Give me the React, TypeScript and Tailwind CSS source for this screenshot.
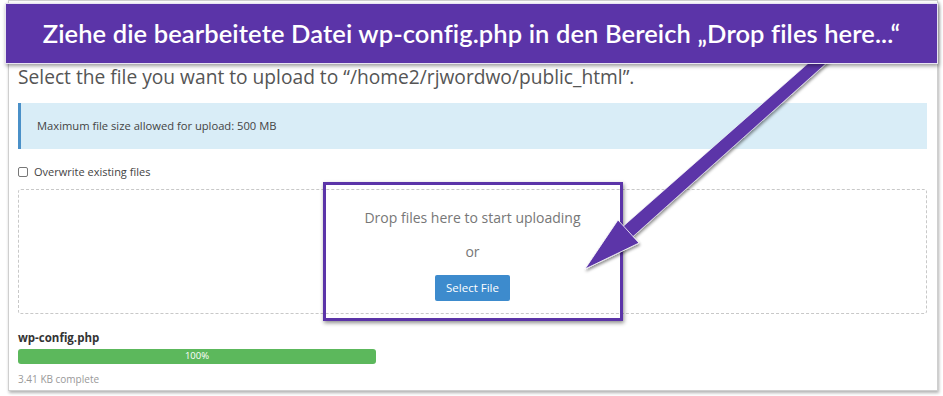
export default function App() {
  return (
    <div className="relative h-[396px] w-[943px] overflow-hidden bg-white font-['Open_Sans',sans-serif]">
      {/* the cPanel upload card */}
      <div className="ml-[8px] h-[391px] w-[930px] border border-[#cfcfcf] bg-white pl-[9px] pr-[10px] pt-[63px] shadow-[1px_2px_3px_rgba(0,0,0,0.3)]">
        <h2 className="text-[19.2px] leading-[26px] text-[#555]">
          Select the file you want to upload to “/home2/rjwordwo/public_html”.
        </h2>

        <div className="mt-[13px] flex h-[46px] items-center border-l-[3px] border-[#4a90c8] bg-[#d9edf7] pl-[16px] text-[11.2px] text-[#444]">
          Maximum file size allowed for upload: 500 MB
        </div>

        <label className="mt-[16px] flex items-center gap-[6px] text-[11px] leading-[14px] text-[#444]">
          <span className="h-[10px] w-[10px] rounded-[2px] border border-[#777] bg-white" />
          Overwrite existing files
        </label>

        <div className="mt-[10px] flex h-[125px] flex-col items-center rounded-[3px] border border-dashed border-[#c8c8c8] pt-[18px]">
          <p className="text-[14px] leading-[20px] text-[#777]">Drop files here to start uploading</p>
          <p className="mt-[14px] text-[14px] leading-[20px] text-[#777]">or</p>
          <button className="mt-[13px] h-[26px] rounded-[2px] bg-[#3d8bcd] px-[11px] text-[11.5px] text-white">
            Select File
          </button>
        </div>

        <p className="mt-[17px] text-[11.5px] font-bold leading-[14px] text-[#333]">wp-config.php</p>
        <div className="mt-[4px] flex h-[15px] w-[358px] items-center justify-center rounded-[3px] bg-[#5cb85c] text-[9.5px] text-white">
          100%
        </div>
        <p className="mt-[8px] text-[10px] leading-[14px] text-[#999]">3.41 KB complete</p>
      </div>

      {/* annotation: highlight around the drop area */}
      <div className="absolute left-[323px] top-[182px] h-[139px] w-[300px] border-[3px] border-[#5b34a8] shadow-[1px_2px_4px_rgba(0,0,0,0.45)]" />

      {/* annotation: arrow */}
      <svg className="absolute left-0 top-0" width="943" height="396" viewBox="0 0 943 396">
        <defs>
          <filter id="sh" x="-20%" y="-20%" width="140%" height="140%">
            <feDropShadow dx="1" dy="2" stdDeviation="1.5" floodColor="#000" floodOpacity="0.45" />
          </filter>
        </defs>
        <g filter="url(#sh)">
          <polygon points="812,60 830,60 628,241 619,230" fill="#5b34a8" stroke="#fff" strokeWidth="0.6" />
          <polygon points="585,269 618,220 639,243" fill="#5b34a8" stroke="#fff" strokeWidth="0.8" strokeLinejoin="round" />
        </g>
      </svg>

      {/* annotation: banner */}
      <div className="absolute left-[5px] top-[3px] flex h-[61px] w-[933px] items-center justify-center border border-[#e8e4f2] bg-[#5b34a8] font-['Lato',sans-serif] text-[25.5px] font-semibold tracking-[0.1px] text-white shadow-[1px_2px_4px_rgba(0,0,0,0.4)]">
        Ziehe die bearbeitete Datei wp-config.php in den Bereich „Drop files here...“
      </div>
    </div>
  );
}
